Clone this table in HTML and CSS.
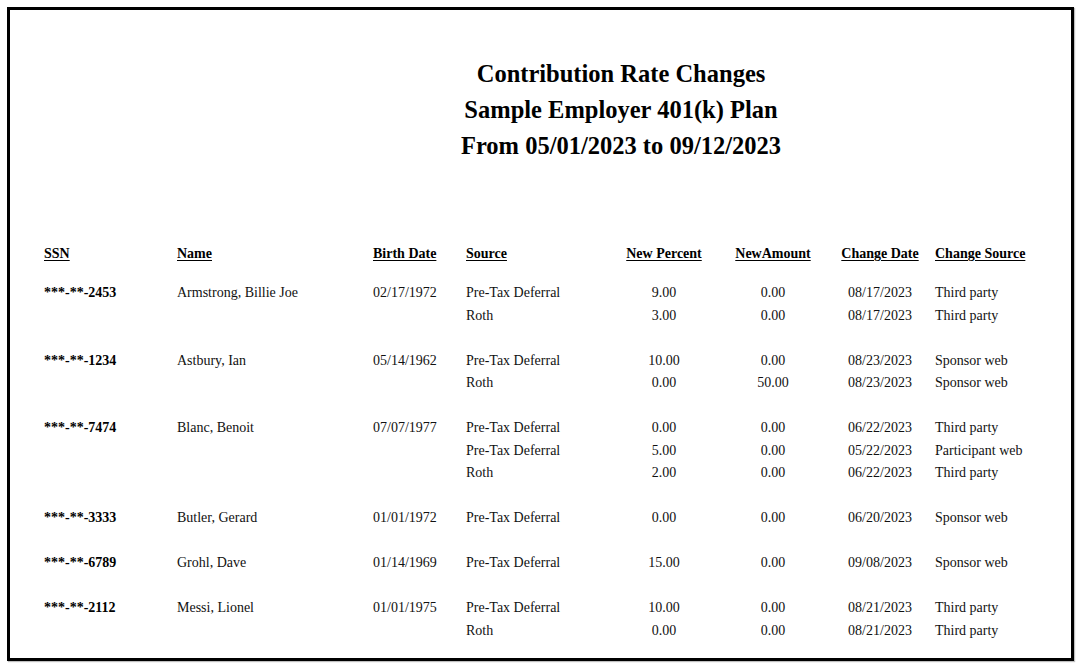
FILE: index.html
```html
<!DOCTYPE html>
<html>
<head>
<meta charset="utf-8">
<link rel="stylesheet" href="styles.css">
</head>
<body>
<div class="report">
  <div class="title">
    <div>Contribution Rate Changes</div>
    <div>Sample Employer 401(k) Plan</div>
    <div>From 05/01/2023 to 09/12/2023</div>
  </div>
  <div class="grid head">
    <div><u>SSN</u></div>
    <div><u>Name</u></div>
    <div><u>Birth Date</u></div>
    <div><u>Source</u></div>
    <div class="c"><u>New Percent</u></div>
    <div class="c"><u>NewAmount</u></div>
    <div class="c"><u>Change Date</u></div>
    <div class="cs"><u>Change Source</u></div>
  </div>

  <div class="grid group first">
    <div class="ssn">***-**-2453</div><div>Armstrong, Billie Joe</div><div>02/17/1972</div>
    <div>Pre-Tax Deferral</div><div class="c">9.00</div><div class="c">0.00</div><div class="c">08/17/2023</div><div class="cs">Third party</div>
    <div></div><div></div><div></div>
    <div>Roth</div><div class="c">3.00</div><div class="c">0.00</div><div class="c">08/17/2023</div><div class="cs">Third party</div>
  </div>

  <div class="grid group">
    <div class="ssn">***-**-1234</div><div>Astbury, Ian</div><div>05/14/1962</div>
    <div>Pre-Tax Deferral</div><div class="c">10.00</div><div class="c">0.00</div><div class="c">08/23/2023</div><div class="cs">Sponsor web</div>
    <div></div><div></div><div></div>
    <div>Roth</div><div class="c">0.00</div><div class="c">50.00</div><div class="c">08/23/2023</div><div class="cs">Sponsor web</div>
  </div>

  <div class="grid group">
    <div class="ssn">***-**-7474</div><div>Blanc, Benoit</div><div>07/07/1977</div>
    <div>Pre-Tax Deferral</div><div class="c">0.00</div><div class="c">0.00</div><div class="c">06/22/2023</div><div class="cs">Third party</div>
    <div></div><div></div><div></div>
    <div>Pre-Tax Deferral</div><div class="c">5.00</div><div class="c">0.00</div><div class="c">05/22/2023</div><div class="cs">Participant web</div>
    <div></div><div></div><div></div>
    <div>Roth</div><div class="c">2.00</div><div class="c">0.00</div><div class="c">06/22/2023</div><div class="cs">Third party</div>
  </div>

  <div class="grid group">
    <div class="ssn">***-**-3333</div><div>Butler, Gerard</div><div>01/01/1972</div>
    <div>Pre-Tax Deferral</div><div class="c">0.00</div><div class="c">0.00</div><div class="c">06/20/2023</div><div class="cs">Sponsor web</div>
  </div>

  <div class="grid group">
    <div class="ssn">***-**-6789</div><div>Grohl, Dave</div><div>01/14/1969</div>
    <div>Pre-Tax Deferral</div><div class="c">15.00</div><div class="c">0.00</div><div class="c">09/08/2023</div><div class="cs">Sponsor web</div>
  </div>

  <div class="grid group">
    <div class="ssn">***-**-2112</div><div>Messi, Lionel</div><div>01/01/1975</div>
    <div>Pre-Tax Deferral</div><div class="c">10.00</div><div class="c">0.00</div><div class="c">08/21/2023</div><div class="cs">Third party</div>
    <div></div><div></div><div></div>
    <div>Roth</div><div class="c">0.00</div><div class="c">0.00</div><div class="c">08/21/2023</div><div class="cs">Third party</div>
  </div>
</div>
</body>
</html>
```

FILE: styles.css
```css
html, body {
  margin: 0;
  padding: 0;
  background: #ffffff;
}

body {
  font-family: "Liberation Serif", "Times New Roman", serif;
  color: #111111;
}

.report {
  box-sizing: border-box;
  margin: 7px;
  width: 1067px;
  height: 654px;
  border: 3px solid #000000;
  padding: 46px 0 0 34px;
  overflow: hidden;
  box-shadow: 1px 1px 1px rgba(0, 0, 0, 0.25);
}

.title {
  padding-left: 127px;
  text-align: center;
  font-weight: bold;
  font-size: 24.5px;
  line-height: 36px;
  color: #000000;
}

.grid {
  display: grid;
  grid-template-columns: 133px 196px 93px 146px 104px 114px 100px 1fr;
  font-size: 14px;
  line-height: 22.5px;
  white-space: nowrap;
}

.head {
  margin-top: 79px;
  margin-bottom: 16.5px;
  font-weight: bold;
  color: #000000;
}

.head u {
  text-decoration-thickness: 1px;
  text-underline-offset: 2px;
}

.group {
  margin-bottom: 22.5px;
}

.c {
  text-align: center;
}

.cs {
  padding-left: 5px;
}

.ssn {
  font-weight: bold;
  color: #000000;
}
```
